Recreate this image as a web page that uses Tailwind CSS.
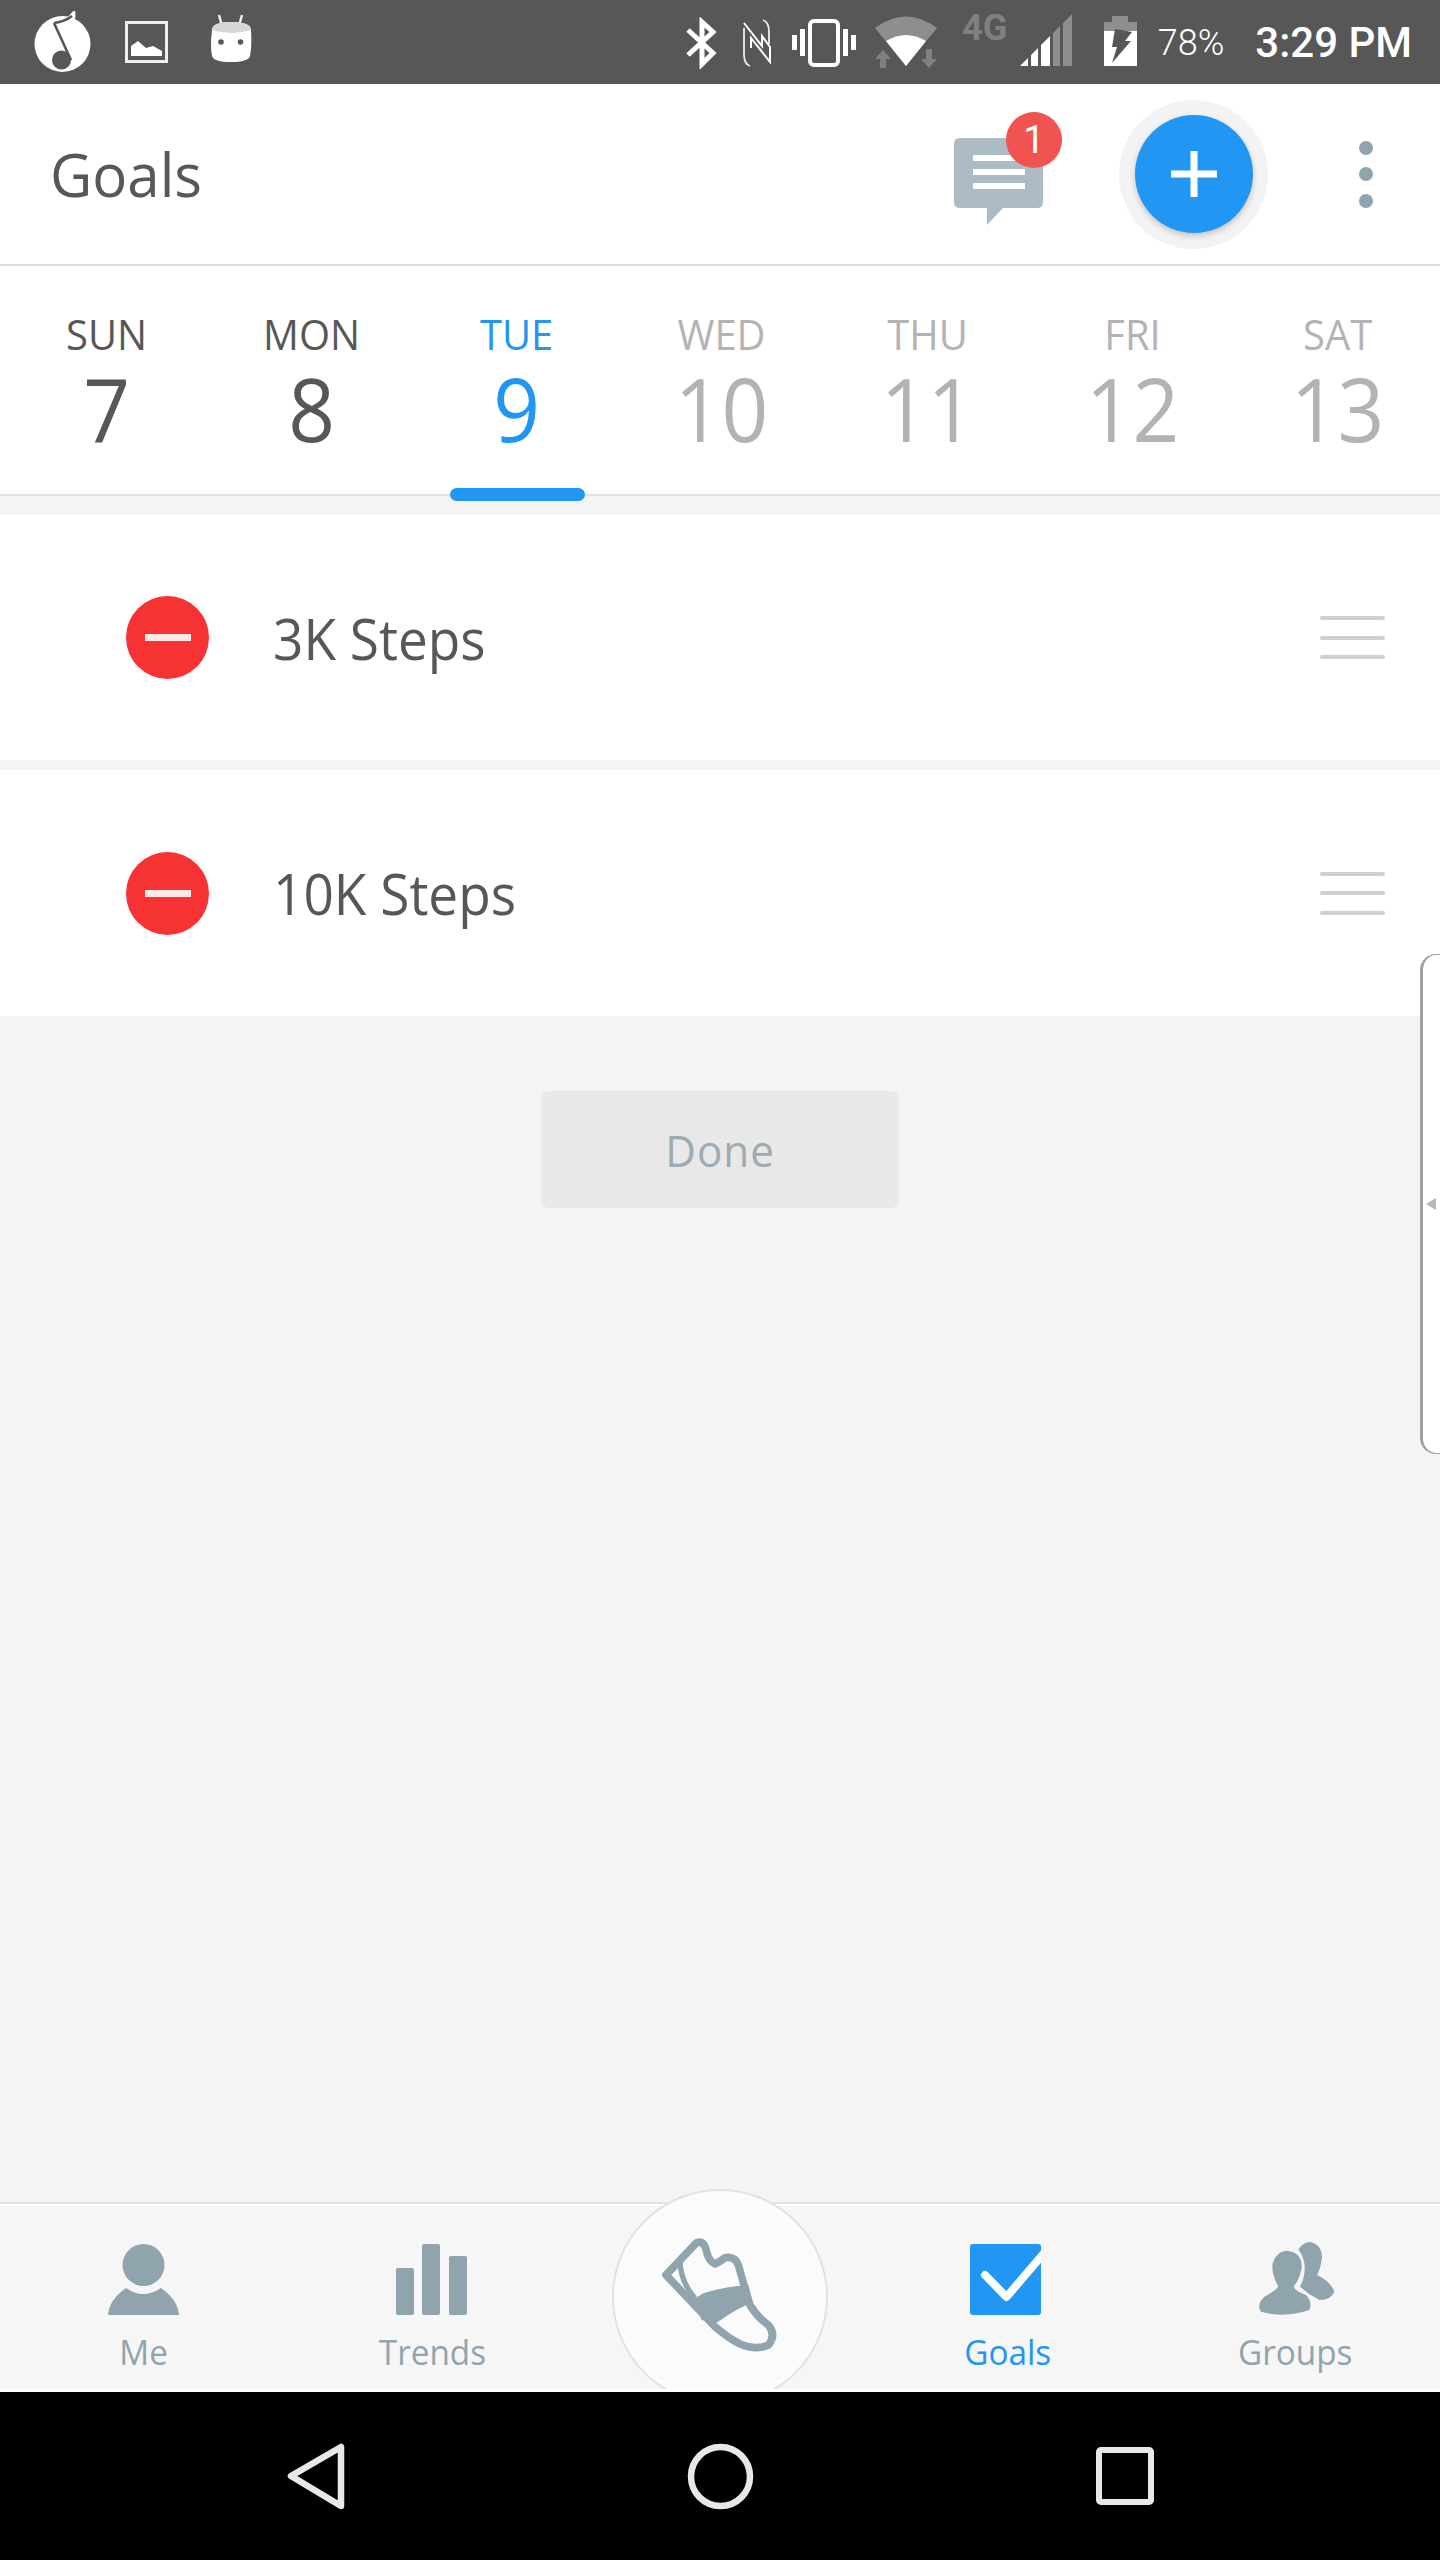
<!DOCTYPE html>
<html>
<head>
<meta charset="utf-8">
<script src="https://cdn.jsdelivr.net/npm/@tailwindcss/browser@4"></script>
</head>
<body class="m-0">
<div class="relative w-[1440px] h-[2560px] overflow-hidden flex flex-col bg-[#f4f4f4] font-['Open_Sans',sans-serif] text-[#575757]">

  <!-- status bar -->
  <div class="h-[84px] shrink-0 bg-[#575757] flex items-start justify-between">
    <div class="flex items-start pl-[34px]">
      <svg class="mt-[11px]" width="58" height="62" viewBox="34 11 58 62">
        <ellipse cx="62.5" cy="44" rx="28" ry="28" fill="#fff"/>
        <path d="M54 24 C60 23 68 20 74 12 C75 21 72 28 64 31" fill="#fff" stroke="#fff" stroke-width="2.5"/>
        <path d="M54 23 C61 22 67 20 72 16 M54 23 L71 60" stroke="#575757" stroke-width="2.6" fill="none"/>
        <circle cx="61.500" cy="60" r="9.500" fill="#575757"/>
      </svg>
      <svg class="mt-[21px] ml-[33px]" width="44" height="43" viewBox="125 21 44 43">
        <rect x="126.5" y="22.5" width="40" height="39" fill="none" stroke="#eee" stroke-width="3"/>
        <path d="M131 56 V46 L138 41 L146 48 L153 46 L162 51 V56 Z" fill="#fff"/>
      </svg>
      <svg class="mt-[13px] ml-[41px]" width="44" height="50" viewBox="210 13 44 50">
        <path d="M219 15 L222 26 M242 15 L239 26" stroke="#eee" stroke-width="2.5"/>
        <path d="M212 30 Q212 22 231 22 Q251 22 251 30 Q252 46 250 56 Q248 62 231 62 Q214 62 212 56 Q210 46 212 30 Z" fill="#fff"/>
        <path d="M212 30 Q212 22 231 22 Q251 22 251 30 Q240 33 231 33 Q222 33 212 30 Z" fill="#d6d6d6"/>
        <circle cx="221" cy="42" r="2.8" fill="#575757"/><circle cx="240.500" cy="42" r="2.8" fill="#575757"/>
      </svg>
    </div>
    <div class="flex items-start pr-[28px]">
      <svg class="mt-[17px]" width="34" height="52" viewBox="685 17 34 52">
        <path d="M689 30 L714 53 L703 64 V22 L714 32 L689 55" fill="none" stroke="#fff" stroke-width="5"/>
      </svg>
      <svg class="mt-[17px] ml-[24px]" width="30" height="52" viewBox="743 17 30 52">
        <path d="M745 28 V54 Q745 64 751 66" fill="none" stroke="#eee" stroke-width="1.8"/>
        <path d="M764 20 Q770 22 770 32 V44" fill="none" stroke="#eee" stroke-width="1.8"/>
        <path d="M745 23 L763 46 V36 L771 47 V62 L752 38 V48" fill="none" stroke="#fff" stroke-width="2"/>
      </svg>
      <svg class="mt-[18px] ml-[19px]" width="65" height="49" viewBox="791 18 65 49">
        <rect x="810" y="21" width="28" height="44" rx="4" fill="none" stroke="#fff" stroke-width="4"/>
        <path d="M792 35 h5 v15 h-5 z M800 29 h5 v27 h-5 z M843 29 h5 v27 h-5 z M851 35 h5 v15 h-5 z" fill="#fff"/>
      </svg>
      <svg class="mt-[16px] ml-[18px]" width="64" height="53" viewBox="874 16 64 53">
        <path d="M906 66 L875 28 Q906 5 937 28 Z" fill="#8e8e8e"/>
        <path d="M906 66 L886 41 Q906 29 926 41 Z" fill="#fff"/>
        <path d="M880 68 V59 H875 L883 50 L891 59 H886 V68 Z M926 49 V59 H921 L929 68 L937 59 H932 V49 Z" fill="#808080"/>
      </svg>
      <span class="mt-[5px] ml-[24px] w-[46px] text-[37px] leading-[46px] font-bold text-[#808080] font-['Roboto',sans-serif] inline-block origin-left scale-x-[.98]">4G</span>
      <svg class="mt-[13px] ml-[11px]" width="54" height="54" viewBox="1018 13 54 54">
        <path d="M1019 66 L1027 58 V66 Z M1030 66 V55 L1037 48 V66 Z M1040 66 V45 L1049 36 V66 Z" fill="#fff"/>
        <path d="M1052 66 V33 L1059 26 V66 Z M1062 66 V23 L1071 14 V66 Z" fill="#8e8e8e"/>
      </svg>
      <svg class="mt-[15px] ml-[30px]" width="35" height="52" viewBox="1102 15 35 52">
        <path d="M1111 16 H1127 V22 H1136 V31 H1103 V22 H1111 Z" fill="#8e8e8e"/>
        <path d="M1103 31 H1136 V66 H1103 Z" fill="#fff"/>
        <path d="M1114 29 L1131 32 L1124 41 L1130 41 L1111 63 L1116 47 L1111 47 Z" fill="#575757"/>
      </svg>
      <span class="mt-[19px] ml-[20px] text-[36px] leading-[48px] font-light text-white font-['Roboto',sans-serif]">78%</span>
      <span class="mt-[18px] ml-[31px] text-[42px] leading-[50px] font-medium text-white font-['Roboto',sans-serif]">3:29 PM</span>
    </div>
  </div>

  <!-- header -->
  <div class="h-[182px] shrink-0 bg-white border-b-2 border-[#dedede] flex items-center">
    <span class="ml-[50px] inline-block origin-left scale-x-[.97] text-[60px] leading-[80px]">Goals</span>
    <div class="ml-auto flex items-center">
      <div class="relative w-[89px] h-[87px] mt-[14px]">
        <svg width="89" height="87" viewBox="954 138 89 87">
          <path d="M960 138 H1037 Q1043 138 1043 144 V202 Q1043 208 1037 208 H1003 L987 225 V208 H960 Q954 208 954 202 V144 Q954 138 960 138 Z" fill="#adbcc4"/>
          <path d="M973 155 H1025 V161 H973 Z M973 169 H1025 V175 H973 Z M973 183 H1025 V189 H973 Z" fill="#fff"/>
        </svg>
        <div class="absolute left-[52px] top-[-26px] w-[56px] h-[56px] rounded-full bg-[#f15350] text-white flex items-center justify-center text-[38px] leading-none font-['Roboto',sans-serif]">1</div>
      </div>
      <div class="ml-[76px] w-[149px] h-[149px] rounded-full bg-[#f3f3f3] flex items-center justify-center">
        <div class="w-[118px] h-[118px] rounded-full bg-[#2196f3] shadow-[0_3px_6px_rgba(0,0,0,0.2)] flex items-center justify-center">
          <svg width="46" height="46" viewBox="0 0 46 46"><path d="M19.500 0 h7 v19.500 h19.500 v7 h-19.500 v19.500 h-7 v-19.500 h-19.500 v-7 h19.500 z" fill="#fff"/></svg>
        </div>
      </div>
      <div class="ml-[90px] mr-[66px] w-[16px] flex flex-col items-center gap-[12.500px]">
        <div class="w-[14px] h-[14px] rounded-full bg-[#90a4ae]"></div>
        <div class="w-[14px] h-[14px] rounded-full bg-[#90a4ae]"></div>
        <div class="w-[14px] h-[14px] rounded-full bg-[#90a4ae]"></div>
      </div>
    </div>
  </div>

  <!-- days -->
  <div class="h-[230px] shrink-0 bg-white border-b-2 border-[#e2e2e2] grid grid-cols-7 pl-[4px] text-center">
    <div class="pt-[43px]"><div class="h-[50px] text-[42px] leading-[50px] scale-x-[.95]">SUN</div><div class="mt-[11px] text-[88px] leading-[76px] scale-x-[.93]">7</div></div>
    <div class="pt-[43px]"><div class="h-[50px] text-[42px] leading-[50px] scale-x-[.95]">MON</div><div class="mt-[11px] text-[88px] leading-[76px] scale-x-[.93]">8</div></div>
    <div class="relative pt-[43px] text-[#2196f3]"><div class="h-[50px] text-[42px] leading-[50px] scale-x-[.95]">TUE</div><div class="mt-[11px] text-[88px] leading-[76px] scale-x-[.93]">9</div>
      <div class="absolute left-[36px] top-[222px] w-[135px] h-[13px] rounded-full bg-[#2196f3]"></div></div>
    <div class="pt-[43px] text-[#b3b3b3]"><div class="h-[50px] text-[42px] leading-[50px] scale-x-[.95]">WED</div><div class="mt-[11px] text-[88px] leading-[76px] scale-x-[.93]">10</div></div>
    <div class="pt-[43px] text-[#b3b3b3]"><div class="h-[50px] text-[42px] leading-[50px] scale-x-[.95]">THU</div><div class="mt-[11px] text-[88px] leading-[76px] scale-x-[.93]">11</div></div>
    <div class="pt-[43px] text-[#b3b3b3]"><div class="h-[50px] text-[42px] leading-[50px] scale-x-[.95]">FRI</div><div class="mt-[11px] text-[88px] leading-[76px] scale-x-[.93]">12</div></div>
    <div class="pt-[43px] text-[#b3b3b3]"><div class="h-[50px] text-[42px] leading-[50px] scale-x-[.95]">SAT</div><div class="mt-[11px] text-[88px] leading-[76px] scale-x-[.93]">13</div></div>
  </div>

  <!-- goals -->
  <div class="flex-1 flex flex-col pt-[19px]">
    <div class="h-[245px] bg-white flex items-center">
      <div class="ml-[126px] w-[83px] h-[83px] rounded-full bg-[#f63232] flex items-center justify-center"><div class="w-[46px] h-[7px] bg-[#fbe9e9]"></div></div>
      <span class="ml-[64px] inline-block origin-left scale-x-[.95] text-[56px] leading-[70px]">3K Steps</span>
      <div class="ml-auto mr-[55px] w-[65px] flex flex-col gap-[15.500px]"><div class="h-[4px] rounded-full bg-[#cfcfcf]"></div><div class="h-[4px] rounded-full bg-[#cfcfcf]"></div><div class="h-[4px] rounded-full bg-[#cfcfcf]"></div></div>
    </div>
    <div class="mt-[10px] h-[246px] bg-white flex items-center">
      <div class="ml-[126px] w-[83px] h-[83px] rounded-full bg-[#f63232] flex items-center justify-center"><div class="w-[46px] h-[7px] bg-[#fbe9e9]"></div></div>
      <span class="ml-[64px] inline-block origin-left scale-x-[.95] text-[56px] leading-[70px]">10K Steps</span>
      <div class="ml-auto mr-[55px] w-[65px] flex flex-col gap-[15.500px]"><div class="h-[4px] rounded-full bg-[#cfcfcf]"></div><div class="h-[4px] rounded-full bg-[#cfcfcf]"></div><div class="h-[4px] rounded-full bg-[#cfcfcf]"></div></div>
    </div>
    <div class="mt-[75px] mx-auto w-[358px] h-[117px] rounded-[8px] bg-[#e8e8e8] flex items-center justify-center text-[44px] leading-none text-[#9dabb3] tracking-[1px]"><span class="inline-block scale-x-[.96]">Done</span></div>
  </div>

  <!-- bottom nav -->
  <div class="shrink-0 h-[2px] bg-[#e2e2e2]"></div>
  <div class="shrink-0 h-[2px] bg-white"></div>
  <div class="relative shrink-0 h-[183px] bg-[#f6f6f6] grid grid-cols-5 text-center text-[35px] leading-[44px] text-[#90a4ae]">
    <div class="flex flex-col items-center pt-[37px]">
      <svg width="72" height="73" viewBox="108 2243 72 73" fill="#90a4ae">
        <ellipse cx="143.500" cy="2265" rx="21" ry="21"/>
        <path d="M108 2315 Q109 2300 126 2288 Q143 2300 161 2288 Q178 2300 179 2315 Z"/>
      </svg>
      <span class="mt-[14px] inline-block scale-x-[.95]">Me</span>
    </div>
    <div class="flex flex-col items-center pt-[37px]">
      <svg width="72" height="73" viewBox="396 2243 72 73" fill="#90a4ae">
        <rect x="396" y="2268" width="18" height="47" rx="2"/><rect x="422" y="2244" width="18" height="71" rx="2"/><rect x="449" y="2256" width="18" height="59" rx="2"/>
      </svg>
      <span class="mt-[14px] inline-block scale-x-[.95]">Trends</span>
    </div>
    <div></div>
    <div class="flex flex-col items-center pt-[37px] text-[#2196f3]">
      <svg class="mr-[5px]" width="72" height="73" viewBox="969 2243 72 73">
        <rect x="969" y="2244" width="71" height="71" rx="3" fill="#2196f3"/>
        <clipPath id="gc"><rect x="969" y="2244" width="71" height="71" rx="3"/></clipPath>
        <path clip-path="url(#gc)" d="M984 2275 L1005.500 2297 L1044 2252" fill="none" stroke="#fff" stroke-width="8" stroke-linejoin="round" stroke-linecap="round"/>
      </svg>
      <span class="mt-[14px] inline-block scale-x-[.95]">Goals</span>
    </div>
    <div class="flex flex-col items-center pt-[24px]">
      <svg width="110" height="100" viewBox="0 0 330 300" fill="#90a4ae" class="-mb-[12px]">
        <path d="M135 62 Q185 65 182 115 Q175 150 158 170 Q165 185 195 195 Q215 215 205 240 Q130 265 60 245 Q45 225 70 200 Q100 185 112 170 Q90 130 95 100 Q105 65 135 62 Z"/>
        <path d="M205 36 Q240 40 243 80 Q240 115 228 135 Q270 155 280 185 Q270 210 235 210 Q205 195 177 170 Q195 135 190 100 Q185 75 172 58 Q185 38 205 36 Z"/>
      </svg>
      <span class="mt-[12px] mr-[2px] inline-block scale-x-[.95]">Groups</span>
    </div>
    <div class="absolute left-[612px] top-[-17px] w-[216px] h-[200px] overflow-hidden">
      <div class="w-[216px] h-[216px] rounded-full bg-[#fbfbfb] border-2 border-[#e2e2e2] flex items-center justify-center">
        <svg width="160" height="160" viewBox="0 0 480 480" class="mt-[6px]">
          <path d="M78 165 L170 68 Q190 62 197 85 Q205 125 225 132 Q240 125 255 113 Q285 108 295 135 L312 195 L330 255 Q350 290 385 315 Q410 345 385 375 Q350 392 300 372 Q265 355 225 320 L78 165 Z" fill="none" stroke="#90a4ae" stroke-width="23" stroke-linejoin="round"/>
          <path d="M120 130 Q125 190 165 235" fill="none" stroke="#90a4ae" stroke-width="16"/>
          <path d="M160 238 L190 220 Q250 200 325 195 L336 248 Q290 265 230 308 L185 300 Z" fill="#90a4ae"/>
        </svg>
      </div>
    </div>
  </div>
  <div class="shrink-0 h-[3px] bg-white"></div>

  <!-- android nav -->
  <div class="shrink-0 h-[168px] bg-black flex items-start">
    <svg class="ml-[286px] mt-[50px]" width="60" height="69" viewBox="286 2442 60 69">
      <path d="M341 2447 V2506 L291 2476 Z" fill="none" stroke="#e8e8e8" stroke-width="6.500" stroke-linejoin="round"/>
    </svg>
    <svg class="ml-[340px] mt-[50px]" width="70" height="69" viewBox="686 2442 70 69">
      <circle cx="720.500" cy="2476.500" r="29.500" fill="none" stroke="#e8e8e8" stroke-width="6.500"/>
    </svg>
    <svg class="ml-[339px] mt-[54px]" width="60" height="60" viewBox="1095 2446 60 60">
      <rect x="1099" y="2450" width="52" height="52" rx="2" fill="none" stroke="#e8e8e8" stroke-width="6"/>
    </svg>
  </div>

  <!-- floating side handle -->
  <div class="absolute right-0 top-[954px] w-[20px] h-[500px] bg-white border-l-[3px] border-y border-[#a0a0a0] rounded-l-[16px] flex items-center">
    <svg class="ml-[3px]" width="10" height="14" viewBox="0 0 10 14"><path d="M0 7 L10 1 V13 Z" fill="#b8b8b8"/></svg>
  </div>
</div>
</body>
</html>
